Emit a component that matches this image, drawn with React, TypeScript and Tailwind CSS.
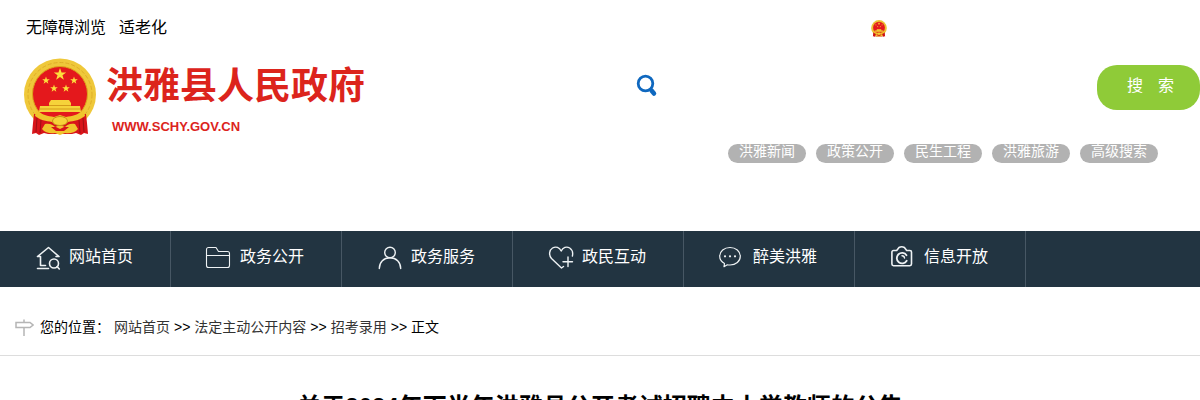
import React from "react";

const quickLinks = ["洪雅新闻", "政策公开", "民生工程", "洪雅旅游", "高级搜索"];

const crumbs = ["网站首页", "法定主动公开内容", "招考录用"];

function Star({ x, y, r }: { x: number; y: number; r: number }) {
  return (
    <path
      transform={`translate(${x} ${y}) scale(${r})`}
      d="M0-1 .24-.31.95-.31.38.12.59.81 0 .4-.59.81-.38.12-.95-.31-.24-.31Z"
      fill="#fcdf3c"
    />
  );
}

function Emblem({ className }: { className: string }) {
  return (
    <svg viewBox="0 0 72 78" className={className} aria-hidden="true">
      <circle cx="36" cy="36.5" r="36" fill="#efc83a" />
      <circle cx="36" cy="36.5" r="32" fill="none" stroke="#dfae28" strokeWidth="1" strokeDasharray="4 2" />
      <circle cx="36" cy="36" r="27.5" fill="#e4181c" stroke="#dca41c" strokeWidth="1" />
      <Star x={36} y={16.5} r={6.5} />
      <Star x={22} y={22.5} r={4} />
      <Star x={50} y={22.5} r={4} />
      <Star x={30} y={30.5} r={4} />
      <Star x={42} y={30.5} r={4} />
      <path d="M27 42h18l2 3v3h9l1 6H15l1-6h9v-3Z" fill="#f6d23a" />
      <path d="M25 47.5h22M16 51h40" stroke="#d49b1a" strokeWidth="1" />
      <path d="M10 56c7 0 12 2 17 5h18c5-3 10-5 17-5l1 9 1 11-4-1-3 2-5-2-4 1H24l-4-1-5 2-3-2-4 1 1-11Z" fill="#d8141a" />
      <path d="M12 52c6 5 12 6 18 7l6-2 6 2c6-1 12-2 18-7l1 6c-5 4-11 5-17 6l-4 3h-8l-4-3c-6-1-12-2-17-6Z" fill="#f0c42c" />
      <path d="M21 66c5-1 8 1 10 3l5-2 5 2c2-2 5-4 10-3l3 5c-3 4-9 5-13 4l-5 2-5-2c-4 1-10 0-13-4Z" fill="#f0c42c" />
      <ellipse cx="36" cy="63" rx="7.500" ry="4.500" fill="#f6d23a" stroke="#c98e18" strokeWidth="1" />
      <path d="M27 69h5l4 2 4-2h5l-5 4h-8Z" fill="#d8141a" />
      <path d="M13 60l-1 14M17 62l-1 13M59 60l1 14M55 62l1 13" stroke="#9e1014" strokeWidth="1" />
    </svg>
  );
}

function NavIcon({ children }: { children: React.ReactNode }) {
  return (
    <svg
      viewBox="0 0 24 24"
      className="h-6 w-6 shrink-0 overflow-visible"
      fill="none"
      stroke="#eef2f4"
      strokeWidth="1.4"
      strokeLinecap="round"
      strokeLinejoin="round"
      aria-hidden="true"
    >
      {children}
    </svg>
  );
}

const navItems = [
  {
    label: "网站首页",
    icon: (
      <>
        <path strokeWidth="1.6" d="M1.500 10.500 12.500 1.500l10.500 9M1.500 10.500h3v9M20 10.500h3M1.500 22.500h11M4.500 19.500h5" />
        <circle cx="18" cy="17.500" r="4.500" strokeWidth="1.600" />
        <path strokeWidth="1.600" d="m21 20.500 2.300 2.500" />
      </>
    ),
  },
  {
    label: "政务公开",
    icon: (
      <path strokeWidth="1.100" d="M-.5 3.500a2 2 0 0 1 2-2H9l2.500 4h9a2 2 0 0 1 2 2V19.500a2 2 0 0 1-2 2h-19a2 2 0 0 1-2-2ZM-.5 9.500h23" />
    ),
  },
  {
    label: "政务服务",
    icon: (
      <>
        <circle cx="12" cy="6.500" r="5.300" />
        <path d="M1.300 22.500c0-6.500 4.500-10.700 10.700-10.700s10.700 4.200 10.700 10.700" />
      </>
    ),
  },
  {
    label: "政民互动",
    icon: (
      <>
        <path d="M14.500 20.500 12.500 22 2.500 12.500C-.5 9 .3 4 3.500 2c3.500-2 7-.5 8.700 3 1.700-3.500 5.300-5 8.500-3 2.500 1.700 3.500 4.500 2.700 8" />
        <path d="M19 11v9.500M14 15.800h9.500" />
      </>
    ),
  },
  {
    label: "醉美洪雅",
    icon: (
      <>
        <path strokeWidth="1.200" d="M4.500 17.500C1.500 15.800-.3 13.200-.3 10.300-.3 5.200 4.200 1.500 10 1.500s10.300 3.700 10.300 8.800-4.500 8.700-10.300 8.700c-1 0-1.800 0-2.700-.2L4 20.700Z" />
        <path strokeWidth="2.200" d="M5 10.300h.01M10 10.300h.01M15 10.300h.01" />
      </>
    ),
  },
  {
    label: "信息开放",
    icon: (
      <>
        <path strokeWidth="1.600" d="M2.500 4.500h3.200l2.300-3q2.700-1.500 5.400 0l2.300 3h3.200a1.600 1.600 0 0 1 1.600 1.600v12a1.600 1.600 0 0 1-1.600 1.600H2.500a1.600 1.600 0 0 1-1.600-1.600v-12a1.600 1.600 0 0 1 1.600-1.600Z" />
        <path strokeWidth="1.800" d="M15.500 9.200a5.300 5.300 0 1 0 .2 5.600" />
        <path strokeWidth="1.400" d="M11 9.800a2.500 2.500 0 0 1 2.500 2.200" />
      </>
    ),
  },
];

export default function App() {
  return (
    <div className="bg-white font-['Liberation_Sans','Noto_Sans_CJK_SC',sans-serif] text-sm text-black">
      <div className="flex items-center pt-4 pl-[26px] text-base">
        <div className="flex flex-1 gap-[13px]">
          <a href="#">无障碍浏览</a>
          <a href="#">适老化</a>
        </div>
        <div className="w-[329px]">
          <Emblem className="h-[17px] w-4" />
        </div>
      </div>

      <header className="flex h-[191px] items-start pl-6">
        <a href="#" className="flex items-start gap-2.5 pt-[18px] text-[#dc241c]">
          <Emblem className="h-[78px] w-[72px]" />
          <div className="pt-[5px]">
            <div className="text-[37px] leading-[48px] font-bold">洪雅县人民政府</div>
            <div className="pt-1.5 pl-1.5 text-[13px] leading-5 font-bold">WWW.SCHY.GOV.CN</div>
          </div>
        </a>
        <div className="ml-auto w-[564px] pt-[25px]">
          <form className="flex" onSubmit={(e) => e.preventDefault()}>
            <svg viewBox="0 0 22 24" className="mt-[9px] h-6 w-[22px]" fill="none" stroke="#0f68bf" aria-hidden="true">
              <circle cx="9.500" cy="9.500" r="7.300" strokeWidth="2.800" />
              <path d="m15.500 16.500 2.500 3" strokeWidth="4.500" strokeLinecap="round" />
            </svg>
            <input type="text" aria-label="搜索" className="min-w-0 flex-1 px-3 text-base outline-none" />
            <button type="submit" className="flex h-[45px] w-[103px] justify-center gap-[15px] rounded-[20px] bg-[#8fcb38] pt-[9px] pl-1 text-base text-white">
              <span>搜</span>
              <span>索</span>
            </button>
          </form>
          <div className="mt-[34px] flex justify-end gap-2.5 pr-[42px]">
            {quickLinks.map((name) => (
              <a key={name} href="#" className="h-[19px] w-[78px] rounded-[10px] bg-[#b2b2b2] text-center text-sm leading-[14px] text-white">
                {name}
              </a>
            ))}
          </div>
        </div>
      </header>

      <nav className="flex bg-[#223441]">
        {navItems.map((item) => (
          <a
            key={item.label}
            href="#"
            className="flex h-14 w-[171px] items-start gap-[9px] border-r border-[#475764] pt-[15px] pl-9 text-base text-white"
          >
            <NavIcon>{item.icon}</NavIcon>
            <span className="leading-[22px]">{item.label}</span>
          </a>
        ))}
      </nav>

      <div className="flex items-center border-b border-[#ddd] pt-[30px] pb-[18px] pl-[15px]">
        <svg viewBox="0 0 19 18" className="mr-1.5 h-[18px] w-[19px]" fill="none" stroke="#b5b5b5" strokeWidth="1.500" aria-hidden="true">
          <path d="M1 4.500h14l3 2.500-3 2.500H1ZM9 1.500v3M9 9.500V18" />
        </svg>
        <div className="flex gap-1">
          <span>您的位置：</span>
          {crumbs.map((name) => (
            <React.Fragment key={name}>
              <a href="#" className="text-[#333]">{name}</a>
              <span>&gt;&gt;</span>
            </React.Fragment>
          ))}
          <span>正文</span>
        </div>
      </div>

      <h1 className="pt-[33px] text-center text-2xl leading-9 font-bold">
        关于2024年下半年洪雅县公开考试招聘中小学教师的公告
      </h1>
    </div>
  );
}
